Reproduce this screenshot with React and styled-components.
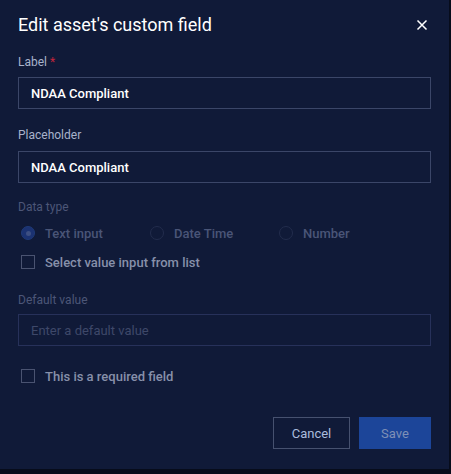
import React from "react";
import styled, { createGlobalStyle } from "styled-components";

const Global = createGlobalStyle`
  html, body { margin: 0; padding: 0; background: #070c1b; }
  * { box-sizing: border-box; }
`;

const Dialog = styled.div`
  width: 449px;
  height: 469px;
  background: #101a38;
  padding: 0 18px 0 18px;
  font-family: Roboto, "Liberation Sans", sans-serif;
  display: flex;
  flex-direction: column;
`;

const Header = styled.div`
  display: flex;
  align-items: center;
  justify-content: space-between;
  padding-top: 14px;
  height: 36px;
`;

const Title = styled.h1`
  margin: 0;
  font-size: 18px;
  line-height: 22px;
  font-weight: 400;
  color: #ffffff;
`;

const CloseBtn = styled.button`
  background: none;
  border: none;
  padding: 0;
  width: 12px;
  height: 12px;
  margin-right: 3px;
  display: flex;
  cursor: pointer;
`;

const Field = styled.div`
  display: flex;
  flex-direction: column;
  margin-top: ${(p) => p.$mt}px;
`;

const Label = styled.label`
  font-size: 12px;
  line-height: 16px;
  color: ${(p) => (p.$disabled ? "#4c5677" : "#a9b2cb")};
  margin-bottom: ${(p) => p.$gap ?? 7}px;
`;

const Star = styled.span`
  color: #c3243b;
`;

const Input = styled.input`
  height: 32px;
  width: 100%;
  background: transparent;
  border: 1px solid ${(p) => (p.disabled ? "#27315a" : "#3b4668")};
  padding: 0 12px;
  font-family: Roboto, "Liberation Sans", sans-serif;
  font-size: 13px;
  font-weight: 500;
  color: #ffffff;
  outline: none;
  &::placeholder {
    color: #3e4869;
    font-weight: 400;
  }
`;

const RadioRow = styled.div`
  display: flex;
  align-items: center;
  height: 20px;
  margin-top: 8px;
  padding-left: 3px;
`;

const RadioItem = styled.div`
  display: flex;
  align-items: center;
  width: ${(p) => p.$w}px;
  gap: 10px;
  font-size: 13px;
  color: #4a5577;
  font-weight: 500;
`;

const RadioDot = styled.span`
  width: 14px;
  height: 14px;
  border-radius: 50%;
  flex: none;
  border: 1px solid ${(p) => (p.$on ? "#1f3a78" : "#222c4c")};
  background: ${(p) => (p.$on ? "#1b3272" : "transparent")};
  display: flex;
  align-items: center;
  justify-content: center;
  &::after {
    content: "";
    width: 5px;
    height: 5px;
    border-radius: 50%;
    background: ${(p) => (p.$on ? "#3d4f82" : "transparent")};
  }
`;

const CheckRow = styled.div`
  display: flex;
  align-items: center;
  gap: 10px;
  padding-left: 3px;
  margin-top: ${(p) => p.$mt}px;
  height: 16px;
  font-size: 13px;
  font-weight: 500;
  color: #8790aa;
`;

const Box = styled.span`
  width: 14px;
  height: 14px;
  flex: none;
  border: 1px solid #4a5371;
`;

const Footer = styled.div`
  display: flex;
  justify-content: flex-end;
  gap: 9px;
  margin-top: 33px;
`;

const Button = styled.button`
  height: 32px;
  width: ${(p) => p.$w}px;
  font-family: Roboto, "Liberation Sans", sans-serif;
  font-size: 13px;
  border: 1px solid ${(p) => (p.$primary ? "#1c4599" : "#46516f")};
  background: ${(p) => (p.$primary ? "#1c4599" : "transparent")};
  color: ${(p) => (p.$primary ? "#7e90b6" : "#aabcdd")};
  cursor: pointer;
`;

export default function App() {
  return (
    <>
      <Global />
      <Dialog>
        <Header>
          <Title>Edit asset's custom field</Title>
          <CloseBtn aria-label="close">
            <svg width="12" height="12" viewBox="0 0 12 12">
              <path d="M1.5 1.5 L10.5 10.5 M10.5 1.5 L1.5 10.5" stroke="#ffffff" strokeWidth="1.5" />
            </svg>
          </CloseBtn>
        </Header>

        <Field $mt={18}>
          <Label>
            Label <Star>*</Star>
          </Label>
          <Input defaultValue="NDAA Compliant" />
        </Field>

        <Field $mt={18}>
          <Label $gap={8}>Placeholder</Label>
          <Input defaultValue="NDAA Compliant" />
        </Field>

        <Field $mt={16}>
          <Label $disabled $gap={0}>Data type</Label>
          <RadioRow>
            <RadioItem $w={129}>
              <RadioDot $on />
              Text input
            </RadioItem>
            <RadioItem $w={129}>
              <RadioDot />
              Date Time
            </RadioItem>
            <RadioItem $w={100}>
              <RadioDot />
              Number
            </RadioItem>
          </RadioRow>
          <CheckRow $mt={11}>
            <Box />
            Select value input from list
          </CheckRow>
        </Field>

        <Field $mt={22}>
          <Label $disabled $gap={6}>Default value</Label>
          <Input disabled placeholder="Enter a default value" />
        </Field>

        <CheckRow $mt={22}>
          <Box />
          This is a required field
        </CheckRow>

        <Footer>
          <Button $w={77}>Cancel</Button>
          <Button $w={72} $primary>Save</Button>
        </Footer>
      </Dialog>
    </>
  );
}
